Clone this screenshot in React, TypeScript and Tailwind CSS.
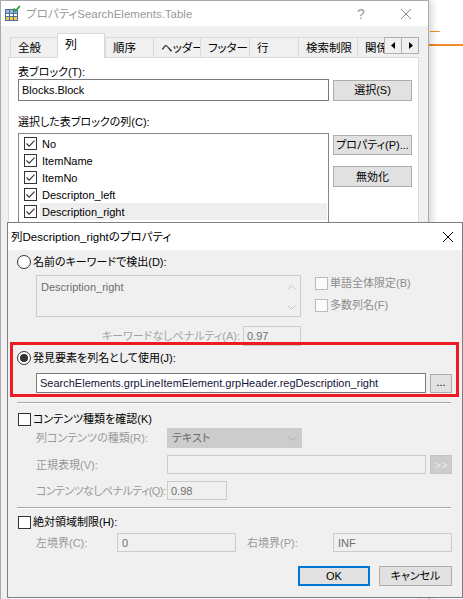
import React from "react";

const Check = ({ checked = false, disabled = false }: { checked?: boolean; disabled?: boolean }) => (
  <span
    className={
      disabled
        ? "w-[13px] h-[13px] border border-[#bcbcbc] bg-[#fbfbfb] flex items-center justify-center shrink-0"
        : "w-[13px] h-[13px] border border-[#333333] bg-white flex items-center justify-center shrink-0"
    }
  >
    {checked && (
      <svg width="11" height="11" viewBox="0 0 11 11">
        <path d="M1.5 5.5 L4.2 8.2 L9.5 2.6" stroke="#333333" strokeWidth="1.1" fill="none" />
      </svg>
    )}
  </span>
);

const Radio = ({ selected = false }: { selected?: boolean }) => (
  <span className="w-[14px] h-[14px] rounded-full border border-[#333333] bg-white flex items-center justify-center shrink-0">
    {selected && <span className="w-[8px] h-[8px] rounded-full bg-[#333333]" />}
  </span>
);

const XIcon = ({ color }: { color: string }) => (
  <svg width="12" height="12" viewBox="0 0 12 12">
    <path d="M1 1 L11 11 M11 1 L1 11" stroke={color} strokeWidth="1" fill="none" />
  </svg>
);

const TableIcon = () => (
  <svg width="17" height="17" viewBox="0 0 17 17">
    <rect x="1.5" y="4.5" width="12" height="11" fill="#ffffff" stroke="#4a6f9c" />
    <rect x="2" y="5" width="11" height="3" fill="#9cb8d8" />
    <rect x="2" y="12" width="11" height="3" fill="#f2c94c" />
    <path d="M1.5 8.5 H13.5 M1.5 11.5 H13.5 M5.5 4.5 V15.5 M9.5 4.5 V15.5" stroke="#4a6f9c" strokeWidth="1" />
    <path d="M9.5 3.5 L11.5 6 L15.8 1" stroke="#2e9e44" strokeWidth="1.8" fill="none" />
  </svg>
);

const Chevron = ({ up, color }: { up?: boolean; color: string }) => (
  <svg width="9" height="5" viewBox="0 0 9 5">
    <path d={up ? "M0.5 4.5 L4.5 0.5 L8.5 4.5" : "M0.5 0.5 L4.5 4.5 L8.5 0.5"} stroke={color} strokeWidth="1" fill="none" />
  </svg>
);

const Tab = ({ label, w, selected }: { label: string; w: string; selected?: boolean }) =>
  selected ? (
    <div className={`${w} h-[25px] bg-white border-l border-t border-r border-[#d9d9d9] flex items-center pl-[7px] pb-[2px] shrink-0 relative z-10 text-[12px]`}>
      {label}
    </div>
  ) : (
    <div className={`${w} h-[20px] mb-[1px] bg-[#f0f0f0] border-l border-t border-[#d9d9d9] flex items-center pl-[7px] shrink-0 text-[11.5px]`}>
      {label}
    </div>
  );

const items = ["No", "ItemName", "ItemNo", "Descripton_left", "Description_right"];

export default function App() {
  return (
    <div className="relative w-[463px] h-[599px] overflow-hidden bg-white font-['Liberation_Sans','Noto_Sans_CJK_JP',sans-serif] [font-feature-settings:'palt'] text-[11px] leading-[14px] text-black whitespace-nowrap">
      {/* background bits */}
      <div className="absolute left-[429px] top-[26px] text-[12px] text-[#f08a2a]">ー</div>
      <div className="absolute left-[429px] top-[44px] w-[40px] h-[2px] bg-[#f08a2a]" />

      {/* Window 1 */}
      <div className="absolute left-0 top-0 w-[429px] h-[640px] border border-[#aaaaaa] bg-[#f0f0f0] flex flex-col shadow-[3px_0_7px_rgba(0,0,0,0.16)]">
        <div className="h-[25px] bg-white flex items-center shrink-0">
          <div className="ml-[3px] w-[17px] h-[17px]">
            <TableIcon />
          </div>
          <span className="ml-[5px] text-[11.5px] text-[#999999]">プロパティSearchElements.Table</span>
          <span className="ml-auto w-[12px] text-center text-[14px] text-[#999999]">?</span>
          <span className="ml-[33px] mr-[16px] flex">
            <XIcon color="#8a8a8a" />
          </span>
        </div>
        <div className="pl-[7px] pt-[7px] flex flex-col">
          <div className="h-[25px] -mb-[1px] flex items-end relative z-10">
            <div className="ml-[2px] w-[374px] h-[25px] flex items-end overflow-hidden">
              <Tab label="全般" w="w-[47px]" />
              <Tab label="列" w="w-[48px]" selected />
              <Tab label="順序" w="w-[48px]" />
              <Tab label="ヘッダー" w="w-[47px]" />
              <Tab label="フッター" w="w-[49px]" />
              <Tab label="行" w="w-[49px]" />
              <Tab label="検索制限" w="w-[59px]" />
              <Tab label="関係" w="w-[60px]" />
            </div>
            <div className="self-start mt-[4px] flex">
              <div className="w-[18px] h-[17px] border border-[#b0b0b0] bg-[#f0f0f0] flex items-center justify-center">
                <svg width="5" height="7" viewBox="0 0 5 7"><path d="M4 0 L0 3.5 L4 7 Z" fill="#000" /></svg>
              </div>
              <div className="w-[18px] h-[17px] -ml-[1px] border border-[#b0b0b0] bg-[#f0f0f0] flex items-center justify-center">
                <svg width="5" height="7" viewBox="0 0 5 7"><path d="M1 0 L5 3.5 L1 7 Z" fill="#000" /></svg>
              </div>
            </div>
          </div>
          <div className="w-[411px] h-[560px] bg-white border border-[#d9d9d9] pl-[9px] flex flex-col">
            <div className="mt-[7px] h-[14px]">表ブロック(T):</div>
            <div className="flex items-center h-[22px]">
              <div className="w-[311px] h-[22px] border border-[#7a7a7a] bg-white flex items-center pl-[3px]">Blocks.Block</div>
              <div className="ml-[4px] w-[79px] h-[21px] border border-[#adadad] bg-[#e1e1e1] flex items-center justify-center">選択(S)</div>
            </div>
            <div className="mt-[14px] h-[14px]">選択した表ブロックの列(C):</div>
            <div className="mt-[4px] flex items-start">
              <div className="w-[311px] h-[110px] border border-[#828790] bg-white pt-[1px] flex flex-col">
                {items.map((it) => (
                  <div key={it} className="h-[17px] flex items-center shrink-0">
                    <span className="ml-[5px] flex">
                      <Check checked />
                    </span>
                    <span
                      className={
                        it === "Description_right"
                          ? "ml-[3px] mr-[1px] pl-[2px] flex-1 h-[17px] flex items-center bg-[#eeeeee]"
                          : "ml-[3px] mr-[1px] pl-[2px] flex-1 h-[17px] flex items-center"
                      }
                    >
                      {it}
                    </span>
                  </div>
                ))}
                <div className="h-[17px] flex items-center shrink-0">
                  <span className="ml-[5px] flex">
                    <Check checked />
                  </span>
                </div>
              </div>
              <div className="ml-[4px] flex flex-col">
                <div className="mt-[2px] w-[79px] h-[20px] border border-[#adadad] bg-[#e1e1e1] flex items-center justify-center">プロパティ(P)...</div>
                <div className="mt-[11px] w-[79px] h-[21px] border border-[#adadad] bg-[#e1e1e1] flex items-center justify-center">無効化</div>
              </div>
            </div>
          </div>
        </div>
      </div>

      {/* Window 2 */}
      <div className="absolute left-[7px] top-[222px] w-[456px] h-[376px] border border-[#7f7f7f] bg-[#f0f0f0] flex flex-col">
        <div className="h-[27px] bg-white flex items-center shrink-0">
          <span className="ml-[3px] text-[11.5px]">列Description_rightのプロパティ</span>
          <span className="ml-auto mr-[8px] flex">
            <XIcon color="#000000" />
          </span>
        </div>
        <div className="pl-[9px] flex flex-col">
          {/* radio 1 */}
          <div className="mt-[4px] h-[16px] flex items-center">
            <Radio />
            <span className="ml-[2px]">名前のキーワードで検出(D):</span>
          </div>
          <div className="mt-[5px] flex items-start">
            <div className="ml-[19px] w-[265px] h-[42px] border border-[#cccccc] bg-[#f0f0f0] flex">
              <div className="flex-1 pl-[4px] pt-[4px] text-[#6d6d6d]">Description_right</div>
              <div className="w-[17px] flex flex-col items-center pt-[9px] gap-[15px]">
                <Chevron up color="#c4c4c4" />
                <Chevron color="#c4c4c4" />
              </div>
            </div>
            <div className="ml-[14px] flex flex-col gap-[6px]">
              <div className="h-[16px] flex items-center">
                <Check disabled />
                <span className="ml-[2px] text-[#8c8c8c]">単語全体限定(B)</span>
              </div>
              <div className="h-[16px] flex items-center">
                <Check disabled />
                <span className="ml-[2px] text-[#8c8c8c]">多数列名(F)</span>
              </div>
            </div>
          </div>
          <div className="mt-[9px] w-[284px] h-[20px] flex items-center justify-end">
            <span className="text-[#a3a3a3]">キーワードなしペナルティ(A):</span>
            <div className="ml-[3px] w-[58px] h-[20px] border border-[#cccccc] bg-[#f0f0f0] flex items-center pl-[3px] text-[#6d6d6d]">0.97</div>
          </div>

          {/* radio 2 */}
          <div className="mt-[4px] h-[16px] flex items-center">
            <Radio selected />
            <span className="ml-[2px]">発見要素を列名として使用(J):</span>
          </div>
          <div className="mt-[7px] h-[20px] flex items-center">
            <div className="ml-[19px] w-[390px] h-[20px] border border-[#7a7a7a] bg-white flex items-center pl-[3px] text-[#15153a] overflow-hidden">
              SearchElements.grpLineItemElement.grpHeader.regDescription_right
            </div>
            <div className="ml-[4px] w-[22px] h-[19px] border border-[#adadad] bg-[#e1e1e1] flex items-center justify-center pb-[3px]">...</div>
          </div>
          <div className="mt-[9px] w-[434px] h-[2px] border-t border-[#a8a8a8] border-b border-b-white" />

          {/* check K */}
          <div className="mt-[7px] h-[16px] flex items-center">
            <span className="ml-[1px] flex">
              <Check />
            </span>
            <span className="ml-[2px]">コンテンツ種類を確認(K)</span>
          </div>
          <div className="mt-[1px] h-[20px] flex items-center">
            <span className="ml-[19px] w-[131px] text-[#999999]">列コンテンツの種類(R):</span>
            <div className="w-[135px] h-[20px] bg-[#cccccc] border border-[#cccccc] flex items-center pl-[4px] text-[#6a6a6a]">
              <span className="flex-1">テキスト</span>
              <span className="mr-[4px] flex">
                <Chevron color="#a8a8a8" />
              </span>
            </div>
          </div>
          <div className="mt-[7px] h-[19px] flex items-center">
            <span className="ml-[19px] w-[131px] text-[#999999]">正規表現(V):</span>
            <div className="w-[259px] h-[19px] border border-[#cccccc] bg-[#f0f0f0]" />
            <div className="ml-[4px] w-[22px] h-[19px] border border-[#c4c4c4] bg-[#cccccc] flex items-center justify-center text-[#ededed]">&gt;&gt;</div>
          </div>
          <div className="mt-[7px] h-[19px] flex items-center">
            <span className="ml-[19px] w-[131px] text-[#999999] tracking-[-0.6px]">コンテンツなしペナルティ(Q):</span>
            <div className="w-[60px] h-[19px] border border-[#cccccc] bg-[#f0f0f0] flex items-center pl-[3px] text-[#6d6d6d]">0.98</div>
          </div>
          <div className="mt-[7px] w-[434px] h-[2px] border-t border-[#a8a8a8] border-b border-b-white" />

          {/* check H */}
          <div className="mt-[5px] h-[16px] flex items-center">
            <span className="ml-[1px] flex">
              <Check />
            </span>
            <span className="ml-[2px]">絶対領域制限(H):</span>
          </div>
          <div className="mt-[3px] h-[19px] flex items-center">
            <span className="ml-[19px] w-[81px] text-[#999999]">左境界(C):</span>
            <div className="w-[119px] h-[19px] border border-[#cccccc] bg-[#f0f0f0] flex items-center pl-[4px] text-[#6d6d6d]">0</div>
            <span className="ml-[11px] w-[86px] text-[#999999]">右境界(P):</span>
            <div className="w-[119px] h-[19px] border border-[#cccccc] bg-[#f0f0f0] flex items-center pl-[4px] text-[#6d6d6d]">INF</div>
          </div>
          <div className="mt-[14px] w-[435px] flex justify-end gap-[9px]">
            <div className="w-[72px] h-[20px] border-2 border-[#0078d7] bg-[#e1e1e1] flex items-center justify-center">OK</div>
            <div className="w-[73px] h-[20px] border border-[#adadad] bg-[#e1e1e1] flex items-center justify-center">キャンセル</div>
          </div>
        </div>

        {/* red annotation box */}
        <div className="absolute left-[2px] top-[119px] w-[449px] h-[55px] border-[3px] border-[#ed1c24] pointer-events-none" />
      </div>
    </div>
  );
}
